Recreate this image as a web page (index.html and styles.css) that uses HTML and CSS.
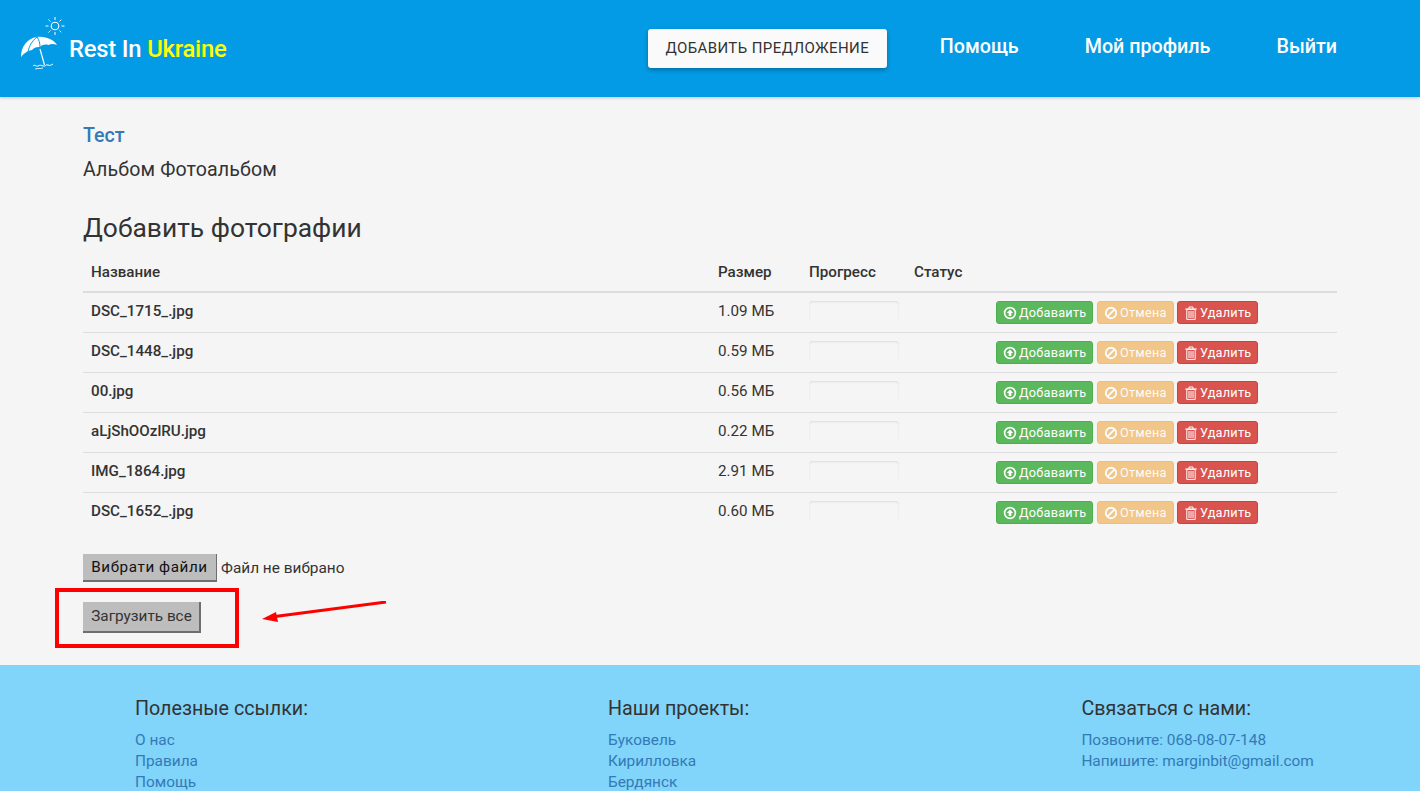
FILE: index.html
```html
<!DOCTYPE html>
<html lang="ru">
<head>
<meta charset="utf-8">
<title>Rest In Ukraine</title>
<link rel="stylesheet" href="styles.css">
</head>
<body>
<svg class="sprite" width="0" height="0">
  <symbol id="i-up" viewBox="0 0 14 14"><circle cx="7" cy="7" r="5.4" fill="none" stroke="#fff" stroke-width="1.6"/><path d="M7 3.4 10.2 7H8.3v3H5.7V7H3.800z" fill="#fff"/></symbol>
  <symbol id="i-ban" viewBox="0 0 14 14"><circle cx="7" cy="7" r="5.2" fill="none" stroke="#fff" stroke-width="1.9"/><path d="M3.4 10.6 10.6 3.4" stroke="#fff" stroke-width="1.9"/></symbol>
  <symbol id="i-trash" viewBox="0 0 14 14"><path d="M1.2 3h11.6M5 2.800V1h4v1.800" fill="none" stroke="#fff" stroke-width="1"/><path d="M2.800 3.400h8.400V13.400H2.800z" fill="none" stroke="#fff" stroke-width="1"/><path d="M5 5v7M7 5v7M9 5v7" stroke="#fff" stroke-width="1"/></symbol>
</svg>
<header class="topbar">
  <a class="brand" href="#">
    <svg class="logo" width="46" height="54" viewBox="0 0 46 54" fill="none">
      <circle cx="35" cy="10" r="3.8" stroke="#fff" stroke-width="1.1"/>
      <path d="M35 1v3M35 16v3M25.500 10h3M41.500 10h3M28.500 3.500l2 2M39.500 14.500l1.800 1.800M28.500 16.500l2-2M39.500 5.500l1.800-1.800" stroke="#fff" stroke-width="1"/>
      <path d="M1 41C1 31 7 22 17 21c9-1 17 3 20 8-3-1.500-6-1.500-8.500 0-3-1-6-.5-8.500 2-3-.5-6 .5-8 3-4 .5-8 3-11 7z" fill="#fff"/>
      <path d="M8 36c1-6 4-11 9-15M20 31c0-4-1-7-3-10" stroke="#039be5" stroke-width="1"/>
      <path d="M20 33l4.500 16" stroke="#fff" stroke-width="1.200"/>
      <path d="M13 50c2-2 3 1 5 0s3-1 5 0 3-2 5-1 3 0 5-1" stroke="#fff" stroke-width="1"/>
      <path d="M15 53c3-1 5 0 8-1" stroke="#fff" stroke-width=".8"/>
    </svg>
    <span class="brand-text">Rest In <span class="brand-accent">Ukraine</span></span>
  </a>
  <nav class="topnav">
    <a class="cta" href="#">ДОБАВИТЬ ПРЕДЛОЖЕНИЕ</a>
    <a class="navlink" href="#">Помощь</a>
    <a class="navlink" href="#">Мой профиль</a>
    <a class="navlink" href="#">Выйти</a>
  </nav>
</header>
<main class="content">
  <a class="title-link" href="#">Тест</a>
  <p class="album">Альбом Фотоальбом</p>
  <h2 class="section-title">Добавить фотографии</h2>
  <table class="files">
    <colgroup><col class="c-name"><col class="c-size"><col class="c-prog"><col class="c-status"><col></colgroup>
    <thead><tr><th>Название</th><th>Размер</th><th>Прогресс</th><th>Статус</th><th></th></tr></thead>
    <tbody>
      <tr><td class="fname">DSC_1715_.jpg</td><td>1.09 МБ</td><td><div class="progress"></div></td><td></td><td class="actions"><button class="btn green"><svg class="ic"><use href="#i-up"/></svg>Добаваить</button><button class="btn amber"><svg class="ic"><use href="#i-ban"/></svg>Отмена</button><button class="btn red"><svg class="ic"><use href="#i-trash"/></svg>Удалить</button></td></tr>
      <tr><td class="fname">DSC_1448_.jpg</td><td>0.59 МБ</td><td><div class="progress"></div></td><td></td><td class="actions"><button class="btn green"><svg class="ic"><use href="#i-up"/></svg>Добаваить</button><button class="btn amber"><svg class="ic"><use href="#i-ban"/></svg>Отмена</button><button class="btn red"><svg class="ic"><use href="#i-trash"/></svg>Удалить</button></td></tr>
      <tr><td class="fname">00.jpg</td><td>0.56 МБ</td><td><div class="progress"></div></td><td></td><td class="actions"><button class="btn green"><svg class="ic"><use href="#i-up"/></svg>Добаваить</button><button class="btn amber"><svg class="ic"><use href="#i-ban"/></svg>Отмена</button><button class="btn red"><svg class="ic"><use href="#i-trash"/></svg>Удалить</button></td></tr>
      <tr><td class="fname">aLjShOOzlRU.jpg</td><td>0.22 МБ</td><td><div class="progress"></div></td><td></td><td class="actions"><button class="btn green"><svg class="ic"><use href="#i-up"/></svg>Добаваить</button><button class="btn amber"><svg class="ic"><use href="#i-ban"/></svg>Отмена</button><button class="btn red"><svg class="ic"><use href="#i-trash"/></svg>Удалить</button></td></tr>
      <tr><td class="fname">IMG_1864.jpg</td><td>2.91 МБ</td><td><div class="progress"></div></td><td></td><td class="actions"><button class="btn green"><svg class="ic"><use href="#i-up"/></svg>Добаваить</button><button class="btn amber"><svg class="ic"><use href="#i-ban"/></svg>Отмена</button><button class="btn red"><svg class="ic"><use href="#i-trash"/></svg>Удалить</button></td></tr>
      <tr><td class="fname">DSC_1652_.jpg</td><td>0.60 МБ</td><td><div class="progress"></div></td><td></td><td class="actions"><button class="btn green"><svg class="ic"><use href="#i-up"/></svg>Добаваить</button><button class="btn amber"><svg class="ic"><use href="#i-ban"/></svg>Отмена</button><button class="btn red"><svg class="ic"><use href="#i-trash"/></svg>Удалить</button></td></tr>
    </tbody>
  </table>
  <div class="file-row"><span class="file-btn">Вибрати файли</span><span class="file-none">Файл не вибрано</span></div>
  <div class="upload-row">
    <button class="upload-all">Загрузить все</button>
    <div class="mark-box"></div>
    <svg class="mark-arrow" width="126" height="24" viewBox="0 0 126 24"><path d="M125 1 14 15.500" stroke="#f00" stroke-width="3"/><path d="M1 18 15 11l2 10z" fill="#f00"/></svg>
  </div>
</main>
<footer class="footer">
  <section class="fcol">
    <h3 class="fhead">Полезные ссылки:</h3>
    <a href="#">О нас</a><a href="#">Правила</a><a href="#">Помощь</a>
  </section>
  <section class="fcol">
    <h3 class="fhead">Наши проекты:</h3>
    <a href="#">Буковель</a><a href="#">Кирилловка</a><a href="#">Бердянск</a>
  </section>
  <section class="fcol">
    <h3 class="fhead">Связаться с нами:</h3>
    <a href="#">Позвоните: 068-08-07-148</a><a href="#">Напишите: marginbit@gmail.com</a>
  </section>
</footer>
</body>
</html>
```
FILE: styles.css
```css
* { box-sizing: border-box; }
html, body { margin: 0; height: 100%; overflow: hidden; }
body { background: #f5f5f5; color: #333; font-family: Roboto, "Noto Sans", sans-serif; font-size: 15.2px; line-height: 20px; }
a { text-decoration: none; }
.sprite { position: absolute; }

.topbar { height: 97px; background: #039be5; display: flex; align-items: center; justify-content: space-between; padding: 0 83px 0 20px; box-shadow: 0 1px 3px rgba(0,0,0,.2); position: relative; }
.brand { display: flex; align-items: center; color: #fff; }
.logo { margin-right: 3px; margin-bottom: 11px; }
.brand-text { font-size: 23.8px; font-weight: 500; letter-spacing: -.2px; }
.brand-accent { color: #ff0; }
.topnav { display: flex; align-items: center; }
.cta { width: 239px; height: 39px; padding-bottom: 2px; background: #fafafa; color: #333; font-size: 15px; letter-spacing: .4px; display: flex; align-items: center; justify-content: center; border-radius: 3px; box-shadow: 0 2px 4px rgba(0,0,0,.3); margin-right: 53px; }
.navlink { color: #fff; font-size: 19.7px; font-weight: 500; margin-right: 66px; position: relative; top: -2px; }
.navlink:last-child { margin-right: 0; }

.content { padding: 0 83px; height: 568px; }
.title-link { display: block; color: #337ab7; font-size: 19.6px; font-weight: 500; padding-top: 29px; line-height: 20px; }
.album { margin: 12px 0 0; font-size: 19.6px; letter-spacing: .12px; line-height: 24px; }
.section-title { margin: 31px 0 0; font-size: 26.4px; font-weight: 400; line-height: 30px; }

.files { width: 100%; border-collapse: collapse; table-layout: fixed; margin-top: 10px; }
.c-name { width: 627px; } .c-size { width: 91px; } .c-prog { width: 105px; } .c-status { width: 82px; }
.files th { text-align: left; font-weight: 500; padding: 8px; height: 39px; border-bottom: 2px solid #ddd; vertical-align: middle; }
.files td { padding: 8px; height: 40px; border-bottom: 1px solid #ddd; vertical-align: top; }
.files tbody tr:last-child td { border-bottom: 0; }
.fname { font-weight: 500; }
.progress { width: 90px; height: 20px; background: #f5f5f5; border-radius: 4px; box-shadow: inset 0 1px 2px rgba(0,0,0,.1); }
.actions { white-space: nowrap; padding-left: 8px !important; }
.btn { height: 23px; padding: 0 6px; border: 1px solid; border-radius: 3px; color: #fff; font: 400 12.7px/18px Roboto, sans-serif; letter-spacing: .25px; display: inline-flex; align-items: center; margin-right: 4px; vertical-align: top; white-space: nowrap; }
.btn:last-child { margin-right: 0; }
.ic { width: 14px; height: 14px; margin-right: 2px; flex: none; }
.green { background: #5cb85c; border-color: #4cae4c; width: 97px; }
.amber { background: #f0ad4e; border-color: #eea236; opacity: .65; width: 77px; margin-right: 3px; }
.red { background: #d9534f; border-color: #d43f3a; width: 81px; }

.file-row { display: flex; align-items: center; margin-top: 21px; height: 28px; }
.file-btn { width: 134px; height: 28px; background: #bdbdbd; color: #111; border-right: 1px solid #6e6e6e; border-bottom: 2px solid #6e6e6e; font-size: 15.2px; letter-spacing: .6px; display: flex; align-items: center; justify-content: center; margin-right: 4px; }
.file-none { font-size: 15.4px; }
.upload-row { position: relative; margin-top: 20px; height: 31px; }
.upload-all { display: block; width: 118px; height: 31px; background: #bdbdbd; color: #333; border: 0; border-right: 2px solid #6e6e6e; border-bottom: 2px solid #6e6e6e; font: 400 15.3px Roboto, sans-serif; padding: 0 0 0 1px; }
.mark-box { position: absolute; left: -28px; top: -14px; width: 184px; height: 60px; border: 4px solid #f00; }
.mark-arrow { position: absolute; left: 178px; top: -1px; }

.footer { background: #81d4fa; height: 126px; padding: 33px 0 0 135px; display: grid; grid-template-columns: 473px 473.4px 1fr; }
.fcol a { display: block; color: #337ab7; font-size: 15.4px; line-height: 21px; }
.fhead { margin: 0 0 10px; font-size: 19.7px; font-weight: 400; line-height: 22px; color: #333; }
```
